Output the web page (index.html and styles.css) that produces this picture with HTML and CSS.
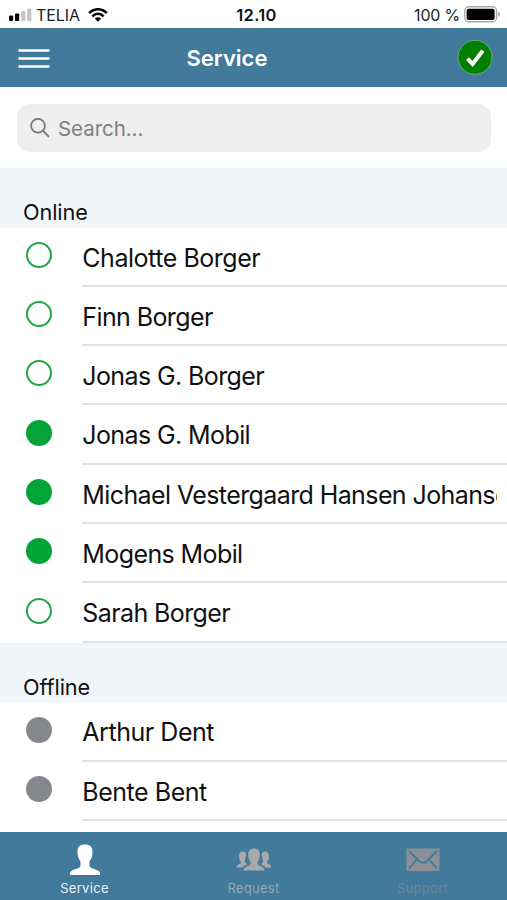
FILE: index.html
```html
<!DOCTYPE html>
<html lang="en">
<head>
<meta charset="utf-8">
<title>Service</title>
<link rel="stylesheet" href="styles.css">
</head>
<body>
<div class="app">
  <div class="status">
    <div class="status-left">
      <svg width="24" height="14" viewBox="0 0 24 14"><rect x="0" y="7.5" width="4.2" height="5.5" rx="1"/><rect x="6" y="5.5" width="4.2" height="7.5" rx="1"/><g fill="#c4c4c4"><rect x="12.2" y="3" width="4.2" height="10" rx="1"/><rect x="18.2" y="0.5" width="4.2" height="12.5" rx="1"/></g></svg>
      <span class="carrier">TELIA</span>
      <svg class="wifi" width="20" height="14" viewBox="0 0 20 14"><g fill="none" stroke="#000" stroke-width="2.5"><path d="M1.2 5.2C6-.1 14-.1 18.8 5.2"/><path d="M4.3 8.3C7.6 5 12.4 5 15.7 8.3"/></g><path d="M6.8 10.6Q10 7.9 13.2 10.6L10 13.7z"/></svg>
    </div>
    <div class="clock">12.10</div>
    <div class="status-right">
      <span class="percent">100 %</span>
      <svg width="36" height="17" viewBox="0 0 36 17"><rect x=".8" y=".8" width="31.8" height="15" rx="4" fill="#fff" stroke="#aaa" stroke-width="1.4"/><rect x="2.6" y="2.7" width="28" height="11.2" rx="2"/><path d="M34 5.8Q36 6.5 36 8.3T34 10.8z" fill="#aaa"/></svg>
    </div>
  </div>
  <header class="nav">
    <svg width="34" height="22" viewBox="0 0 34 22"><path d="M1.5 3.500H32.5M1.5 11.500H32.5M1.5 19.500H32.5" stroke="#fff" stroke-width="2.3"/></svg>
    <h1 class="title">Service</h1>
    <svg width="36" height="37" viewBox="0 0 36 37"><circle cx="18" cy="18.3" r="17" fill="#008000" stroke="#67ad78" stroke-width="1"/><path d="M10.500 19.700L15.600 25L25.800 11.800" fill="none" stroke="#fff" stroke-width="4"/></svg>
  </header>
  <div class="search-area">
    <div class="search">
      <svg width="20" height="20" viewBox="0 0 20 20"><g fill="none" stroke="#777" stroke-width="1.7"><circle cx="8" cy="7.8" r="6.9"/><path d="M13 12.8L19 18.8"/></g></svg>
      <span class="placeholder">Search...</span>
    </div>
  </div>
  <main class="list">
    <h2 class="section">Online</h2>
    <div class="row"><i class="dot away"></i><div class="cell"><span class="name">Chalotte Borger</span></div></div>
    <div class="row"><i class="dot away"></i><div class="cell"><span class="name tight">Finn Borger</span></div></div>
    <div class="row"><i class="dot away"></i><div class="cell"><span class="name tight">Jonas G. Borger</span></div></div>
    <div class="row"><i class="dot on"></i><div class="cell"><span class="name tight">Jonas G. Mobil</span></div></div>
    <div class="row"><i class="dot on"></i><div class="cell"><span class="name tight">Michael Vestergaard Hansen Johansen</span></div></div>
    <div class="row"><i class="dot on"></i><div class="cell"><span class="name tight">Mogens Mobil</span></div></div>
    <div class="row"><i class="dot away"></i><div class="cell"><span class="name tight">Sarah Borger</span></div></div>
    <h2 class="section">Offline</h2>
    <div class="row"><i class="dot off"></i><div class="cell"><span class="name">Arthur Dent</span></div></div>
    <div class="row"><i class="dot off"></i><div class="cell"><span class="name">Bente Bent</span></div></div>
  </main>
  <nav class="tabs">
    <div class="tab active">
      <svg width="32" height="32" viewBox="0 0 32 32"><path d="M16 .5C11 .5 8.200 3 8.500 8C8.500 12 9.500 14.500 11.500 17.500V21.500C11.500 25.500 2 24.500 1 29V31H31V29C30 24.500 20.500 25.500 20.500 21.500V17.500C22.500 14.500 23.500 12 23.500 8C23.800 3 21 .5 16 .5z"/></svg>
      <span>Service</span>
    </div>
    <div class="tab request">
      <svg width="36" height="32" viewBox="0 0 36 32"><path id="side" d="M6.500 7.500C3.800 7.500 2.800 10 3 13C3.200 15.500 4 17 5 18.300C5 20.500 .8 20 .8 23.500H6.500C7.500 21.500 10 21.500 11 20C9 19 9 18 9 17.500C9.500 13 10.500 11 10 9.500C9.500 8 8 7.500 6.500 7.500z"/><use href="#side" transform="translate(36 0) scale(-1 1)"/><path d="M18 4.500C14 4.500 12 7 12.200 11C12.300 14 13 16.300 14.700 18.500C14.700 23 8 21.500 7.500 26.500H28.500C28 21.500 21.300 23 21.300 18.500C23 16.300 23.700 14 23.800 11C24 7 22 4.500 18 4.500z"/></svg>
      <span>Request</span>
    </div>
    <div class="tab support">
      <svg width="34" height="32" viewBox="0 0 34 32"><rect x=".5" y="4.500" width="33" height="22.500" rx="1"/><path d="M3 7L13 17Q17 20.500 21 17L31 7M3 24.500L10.500 16M31 24.500L23.500 16" fill="none" stroke="#417a9b" stroke-width="1.800"/></svg>
      <span>Support</span>
    </div>
  </nav>
</div>
</body>
</html>
```

FILE: styles.css
```css
* { box-sizing: border-box; }
body { margin: 0; background: #fff; font-family: Inter, "Liberation Sans", sans-serif; color: #111; }
svg { display: block; flex: none; }
.app { width: 507px; height: 900px; display: flex; flex-direction: column; overflow: hidden; }
.status { height: 28px; flex: none; display: grid; grid-template-columns: 1fr auto 1fr; align-items: center; padding: 1px 7px 0 9px; color: #222; }
.status-left, .status-right { display: flex; align-items: center; }
.status-right { justify-content: flex-end; gap: 4px; }
.carrier { font-size: 16px; letter-spacing: -0.1px; margin-left: 3px; }
.wifi { margin-left: 8px; }
.clock { font-size: 16.5px; font-weight: 600; letter-spacing: 0.3px; margin-left: 4px; color: #111; }
.percent { font-size: 16px; letter-spacing: -0.2px; }
.nav { height: 59px; flex: none; display: grid; grid-template-columns: 34px 1fr 36px; align-items: center; padding: 0 14px 0 17px; background: #417a9b; }
.title { margin: 0 54px 0 0; font-size: 22px; line-height: 26px; font-weight: 600; text-align: center; color: #fff; }
.search-area { height: 81px; flex: none; padding: 17px 16px 0 17px; }
.search { height: 48px; border-radius: 13px; background: #eee; display: flex; align-items: center; padding-left: 13px; gap: 8px; }
.placeholder { font-size: 20.5px; letter-spacing: -0.05px; color: #808080; }
.list { flex: 1; min-height: 0; overflow: hidden; }
.section { height: 59.6px; margin: 0; padding: 29.4px 23px 0; background: #f3f6f9; font-size: 21.7px; letter-spacing: -0.1px; line-height: 30px; font-weight: 400; }
.row { height: 59.3px; display: flex; }
.dot { flex: none; width: 26px; height: 26px; margin: 14.3px 30px 0 26.3px; border-radius: 50%; }
.away { border: 2px solid #20a646; }
.on { background: #02a437; }
.off { background: #86878c; }
.cell { flex: 1; min-width: 0; padding-right: 10px; border-bottom: 2px solid #e2e2e4; }
.name { display: block; overflow: hidden; white-space: nowrap; font-size: 25px; letter-spacing: -0.46px; line-height: 60px; height: 57px; }
.tight { letter-spacing: -0.6px; }
.tabs { height: 68px; flex: none; display: grid; grid-template-columns: repeat(3, 1fr); background: #417a9b; }
.tab { display: flex; flex-direction: column; align-items: center; padding-top: 12px; font-size: 13px; line-height: 16px; letter-spacing: 0.3px; gap: 4px; }
.active { color: #e9f3f8; }
.active svg { fill: #fff; }
.request { color: #9ba5ac; }
.request svg { fill: #aaa9a9; }
.support { color: #708492; }
.support svg { fill: #8c8f95; }
```
